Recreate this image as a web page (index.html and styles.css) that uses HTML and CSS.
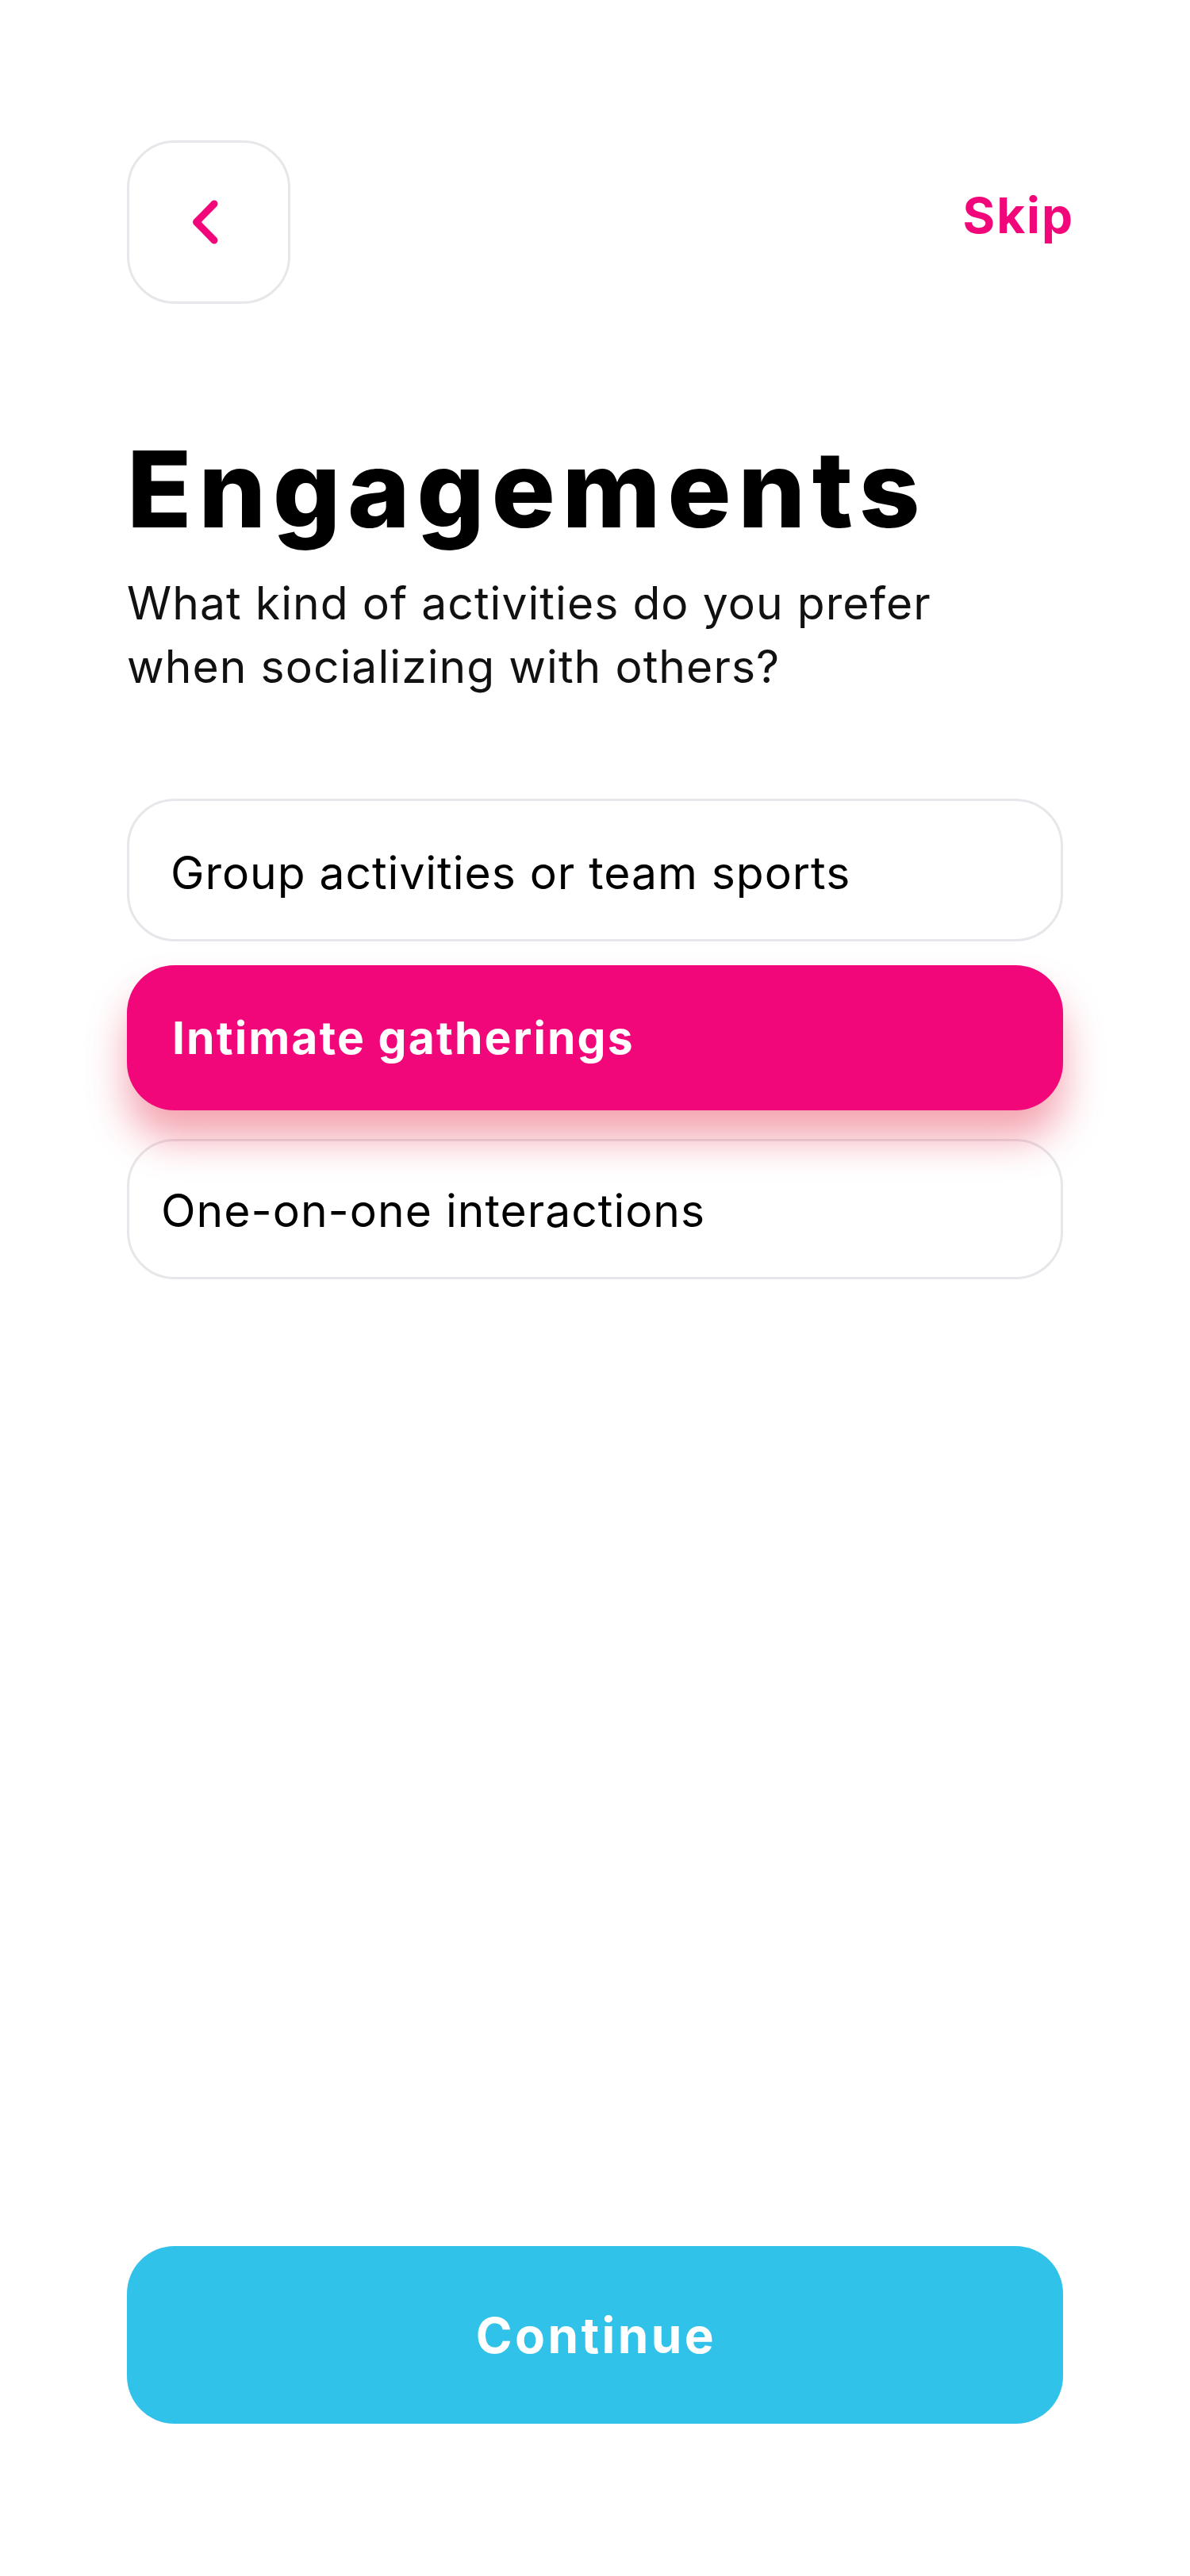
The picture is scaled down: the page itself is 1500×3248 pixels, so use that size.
FILE: index.html
```html
<!DOCTYPE html>
<html lang="en">
<head>
<meta charset="utf-8">
<title>Engagements</title>
<link rel="stylesheet" href="styles.css">
</head>
<body>
<main class="screen">
  <header class="topbar">
    <button class="back" aria-label="Back">
      <svg class="back-icon" width="60" height="60" viewBox="0 0 60 60"><polyline points="39,7 16.5,30 39,53" fill="none" stroke="#F2077A" stroke-width="9" stroke-linecap="round" stroke-linejoin="round"/></svg>
    </button>
    <a class="skip" href="#">Skip</a>
  </header>

  <h1 class="title">Engagements</h1>
  <p class="subtitle">What kind of activities do you prefer<br>when socializing with others?</p>

  <div class="options">
    <div class="option option-first">Group activities or team sports</div>
    <div class="option option-selected">Intimate gatherings</div>
    <div class="option option-last">One-on-one interactions</div>
  </div>

  <button class="continue">Continue</button>
</main>
</body>
</html>
```
FILE: styles.css
```css
* { box-sizing: border-box; }
html, body { margin: 0; padding: 0; background: #ffffff; }
body { font-family: "Inter", "Open Sans", sans-serif; color: #000; }

.screen {
  width: 1500px;
  min-height: 3248px;
  padding: 177px 160px 192px;
  display: flex;
  flex-direction: column;
}

.topbar {
  display: flex;
  justify-content: space-between;
  align-items: center;
  height: 206px;
}

.back {
  width: 206px;
  height: 206px;
  border: 3px solid #E8E6EA;
  border-radius: 60px;
  background: #fff;
  display: flex;
  align-items: center;
  justify-content: center;
  padding: 0;
}
.back-icon { display: block; margin-left: -4px; }

.skip {
  font-size: 62px;
  font-weight: 700;
  letter-spacing: 2px;
  color: #F2077A;
  text-decoration: none;
  margin-right: -14px;
  margin-bottom: 16px;
  line-height: 1;
}

.title {
  margin: 158px 0 0;
  font-size: 134px;
  font-weight: 800;
  line-height: 150px;
  letter-spacing: 8.5px;
}

.subtitle {
  margin: 30px 0 0;
  font-size: 57px;
  font-weight: 400;
  line-height: 80px;
  letter-spacing: 1.05px;
  color: #111;
}

.options {
  margin-top: 126px;
  display: flex;
  flex-direction: column;
}

.option {
  height: 180px;
  border: 3px solid #E8E6EA;
  border-radius: 60px;
  display: flex;
  align-items: center;
  padding-left: 52px;
  padding-top: 6px;
  font-size: 57px;
  font-weight: 400;
  letter-spacing: 0.95px;
  background: transparent;
}
.option-selected {
  margin-top: 30px;
  height: 183px;
  border: none;
  background: #F2077A;
  color: #fff;
  font-weight: 700;
  letter-spacing: 2.1px;
  padding-left: 57px;
  padding-top: 0;
  box-shadow: 0 36px 50px rgba(228, 40, 70, 0.42);
  position: relative;
  z-index: 1;
}
.option-last {
  margin-top: 36px;
  height: 177px;
  padding-left: 40px;
  padding-top: 4px;
  letter-spacing: 1px;
}

.continue {
  margin-top: auto;
  height: 224px;
  width: 100%;
  border: none;
  border-radius: 60px;
  background: #31C2EA;
  color: #fff;
  font-family: inherit;
  font-size: 62px;
  font-weight: 700;
  letter-spacing: 3.4px;
  padding: 0 0 0 3px;
}
```
